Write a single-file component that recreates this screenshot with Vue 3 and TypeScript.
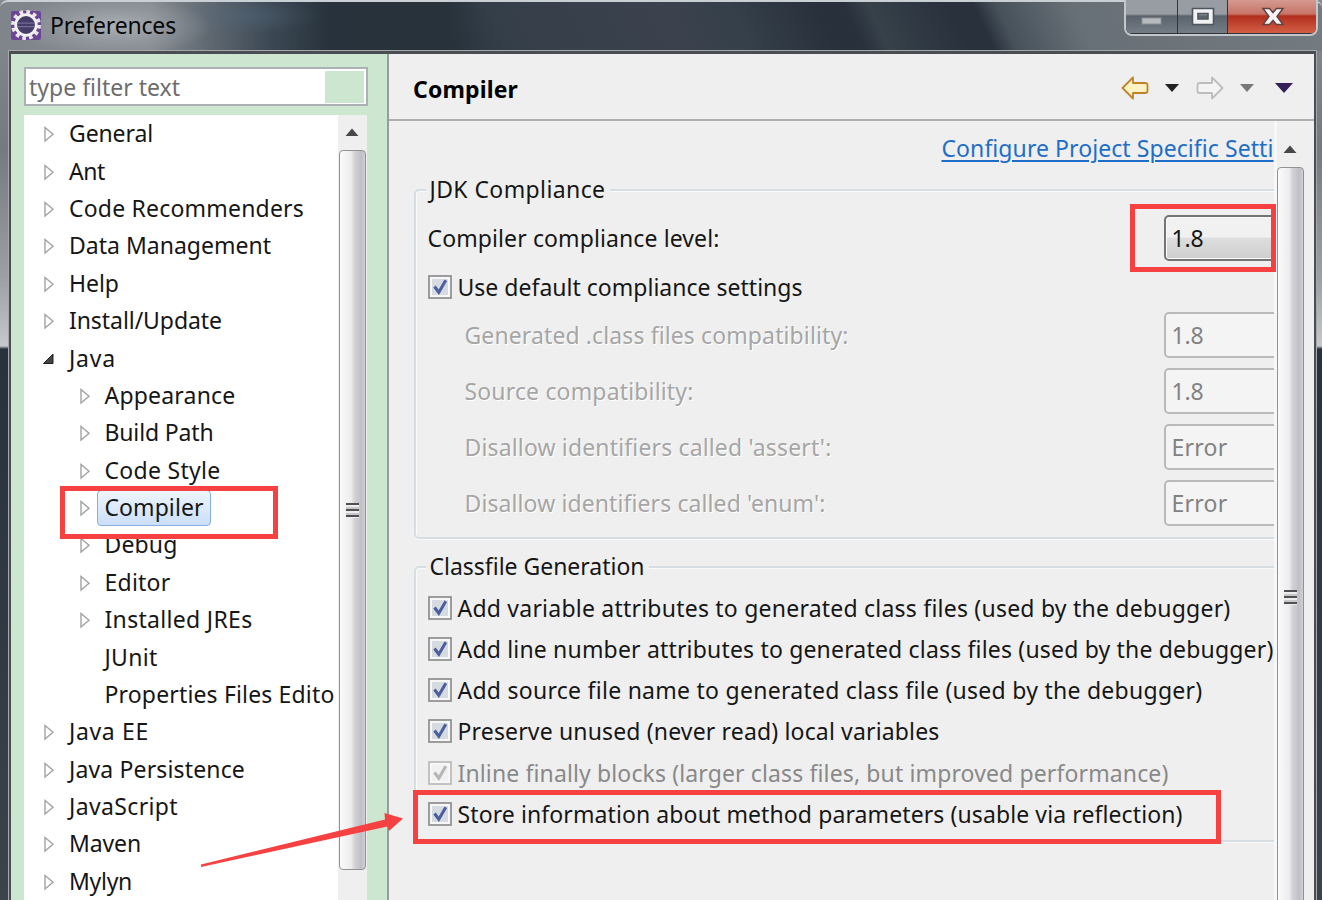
<script setup lang="ts">
import type { Directive } from 'vue'

// Spreads a label's letters so that it takes the given width in pixels.
const vFit: Directive<HTMLElement, number> = {
  mounted(el, { value }) {
    const natural = el.getBoundingClientRect().width
    const count = (el.textContent ?? '').trim().length
    if (value && count > 1) el.style.letterSpacing = `${(value - natural) / count}px`
  },
}

interface TreeItem {
  label: string
  width: number
  child?: boolean
  state?: 'open' | 'leaf'
  selected?: boolean
}

const tree: TreeItem[] = [
  { label: 'General', width: 84 },
  { label: 'Ant', width: 36 },
  { label: 'Code Recommenders', width: 235 },
  { label: 'Data Management', width: 202 },
  { label: 'Help', width: 50 },
  { label: 'Install/Update', width: 153 },
  { label: 'Java', width: 47, state: 'open' },
  { label: 'Appearance', width: 131, child: true },
  { label: 'Build Path', width: 109, child: true },
  { label: 'Code Style', width: 116, child: true },
  { label: 'Compiler', width: 99, child: true, selected: true },
  { label: 'Debug', width: 73, child: true },
  { label: 'Editor', width: 66, child: true },
  { label: 'Installed JREs', width: 148, child: true },
  { label: 'JUnit', width: 53, child: true, state: 'leaf' },
  { label: 'Properties Files Edito', width: 230, child: true, state: 'leaf' },
  { label: 'Java EE', width: 80 },
  { label: 'Java Persistence', width: 176 },
  { label: 'JavaScript', width: 109 },
  { label: 'Maven', width: 72 },
  { label: 'Mylyn', width: 63 },
]

const compliance = [
  { label: 'Generated .class files compatibility:', width: 384, value: '1.8', valueWidth: 32 },
  { label: 'Source compatibility:', width: 229, value: '1.8', valueWidth: 32 },
  { label: "Disallow identifiers called 'assert':", width: 367, value: 'Error', valueWidth: 56 },
  { label: "Disallow identifiers called 'enum':", width: 361, value: 'Error', valueWidth: 56 },
]

const classfile = [
  { label: 'Add variable attributes to generated class files (used by the debugger)', width: 773 },
  { label: 'Add line number attributes to generated class files (used by the debugger)', width: 816 },
  { label: 'Add source file name to generated class file (used by the debugger)', width: 745 },
  { label: 'Preserve unused (never read) local variables', width: 482 },
  { label: 'Inline finally blocks (larger class files, but improved performance)', width: 711, disabled: true },
  { label: 'Store information about method parameters (usable via reflection)', width: 725 },
]
</script>

<template>
  <div class="window">
    <header class="titlebar">
      <svg class="app-icon" viewBox="0 0 32 32">
        <rect x="1" y="2" width="30" height="29" rx="2" fill="#6b4596" />
        <circle cx="16" cy="16" r="13" fill="none" stroke="#e9e6ea" stroke-width="4" stroke-dasharray="3.6 3.2" />
        <circle cx="16" cy="16" r="10.3" fill="#473d69" stroke="#f3f1ee" stroke-width="2.8" />
        <path d="M8 14.2H24M8 17.6H24" stroke="#766b98" stroke-width="1.2" />
      </svg>
      <span class="title"><span v-fit="126">Preferences</span></span>
      <div class="controls">
        <span class="control min"><svg viewBox="0 0 52 33"><rect x="16" y="18" width="19" height="6" fill="#b7bbc0" stroke="#8b9098" /></svg></span>
        <span class="control max"><svg viewBox="0 0 49 33"><path fill-rule="evenodd" d="M14.5 8.5H35.5V24.5H14.5ZM20 13.5V19H30V13.5Z" fill="#f2f2f2" stroke="#4d5560" stroke-width="1.6" /></svg></span>
        <span class="control close"><svg viewBox="0 0 88 33"><path d="M35 8.5H41.5L45 12.5L48.5 8.5H55L49 16.5L55 24.5H48.5L45 20.5L41.5 24.5H35L41 16.5Z" fill="#f7f5f5" stroke="#604344" stroke-width="1.5" /></svg></span>
      </div>
    </header>

    <main class="client">
      <aside class="sidebar">
        <div class="filter"><span v-fit="151">type filter text</span><i class="filter-clear"></i></div>
        <div class="tree-box">
          <ul class="tree">
            <li v-for="item in tree" :key="item.label" :class="{ child: item.child }">
              <svg class="twisty" viewBox="0 0 14 18">
                <path v-if="item.state === 'open'" d="M1.5 13.5H11V4Z" fill="#444" stroke="#222" />
                <path v-else-if="item.state !== 'leaf'" d="M3 2.4V16L11 9.2Z" fill="#fff" stroke="#a3a3a3" stroke-width="1.4" />
              </svg>
              <span class="node" :class="{ selected: item.selected }"><span v-fit="item.width">{{ item.label }}</span></span>
            </li>
          </ul>
          <div class="scroll tree-scroll">
            <svg class="arrow-up" viewBox="0 0 14 8"><path d="M0.5 8L7 0.5L13.5 8Z" fill="#484848" /></svg>
            <div class="thumb"><i class="grip"></i></div>
          </div>
        </div>
      </aside>

      <section class="page">
        <div class="page-head">
          <h1><span v-fit="105">Compiler</span></h1>
          <nav class="history">
            <svg class="nav-arrow" viewBox="0 0 28 24"><path d="M1.5 12L12 1.5V7H24Q26.5 7 26.5 9V15Q26.5 17 24 17H12V22.5Z" fill="#fff2c3" stroke="#be8429" stroke-width="1.8" stroke-linejoin="round" /></svg>
            <svg class="drop" viewBox="0 0 14 8"><path d="M0 0H14L7 8Z" fill="#222" /></svg>
            <svg class="nav-arrow next" viewBox="0 0 28 24"><path d="M26.5 12L16 1.5V7H4Q1.5 7 1.5 9V15Q1.5 17 4 17H16V22.5Z" fill="#f4f4f4" stroke="#bdbdbd" stroke-width="1.8" stroke-linejoin="round" /></svg>
            <svg class="drop" viewBox="0 0 14 8"><path d="M0 0H14L7 8Z" fill="#77777c" /></svg>
            <svg class="drop menu" viewBox="0 0 18 10"><path d="M0 0H18L9 10Z" fill="#35205a" /></svg>
          </nav>
        </div>

        <div class="page-body">
          <div class="form">
            <div class="link-row"><a><span v-fit="332">Configure Project Specific Setti</span></a></div>

            <div class="group jdk">
              <h2><span v-fit="176">JDK Compliance</span></h2>
              <div class="row level">
                <span v-fit="292">Compiler compliance level:</span>
                <div class="combo active"><span v-fit="32">1.8</span></div>
              </div>
              <div class="row check-row">
                <svg class="check" viewBox="0 0 24 24"><rect x="1" y="1" width="22" height="22" fill="#f7f7f7" stroke="#8d8d8f" stroke-width="1.7" /><rect x="4" y="4" width="16" height="16" fill="#d6dae1" /><path d="M6.5 11.5L10.8 17.2L17.8 5.3" fill="none" stroke="#4a5f9d" stroke-width="3" /></svg>
                <span v-fit="345">Use default compliance settings</span>
              </div>
              <div v-for="row in compliance" :key="row.label" class="row sub">
                <span v-fit="row.width" class="etched">{{ row.label }}</span>
                <div class="combo"><span v-fit="row.valueWidth">{{ row.value }}</span></div>
              </div>
            </div>

            <div class="group classfile">
              <h2><span v-fit="215">Classfile Generation</span></h2>
              <div v-for="opt in classfile" :key="opt.label" class="row option" :class="{ disabled: opt.disabled }">
                <svg class="check" viewBox="0 0 24 24">
                  <rect x="1" y="1" width="22" height="22" fill="#f7f7f7" :stroke="opt.disabled ? '#bababa' : '#8d8d8f'" stroke-width="1.7" />
                  <rect x="4" y="4" width="16" height="16" :fill="opt.disabled ? '#f1f1f1' : '#d6dae1'" />
                  <path d="M6.5 11.5L10.8 17.2L17.8 5.3" fill="none" :stroke="opt.disabled ? '#b5b5b5' : '#4a5f9d'" stroke-width="3" />
                </svg>
                <span v-fit="opt.width">{{ opt.label }}</span>
              </div>
            </div>
          </div>
          <div class="scroll page-scroll">
            <svg class="arrow-up" viewBox="0 0 14 8"><path d="M0.5 8L7 0.5L13.5 8Z" fill="#484848" /></svg>
            <div class="thumb"><i class="grip"></i></div>
          </div>
        </div>
      </section>
    </main>

    <i class="mark mark-tree"></i>
    <i class="mark mark-level"></i>
    <i class="mark mark-store"></i>
    <svg class="pointer" viewBox="0 0 206 60"><path d="M1 54.5L185 9.5L184.5 3L203 8.5L189 21L187.5 16.5L1 57Z" fill="#f54142" /></svg>
  </div>
</template>

<style>
body { margin: 0; overflow: hidden; }
</style>

<style scoped>
* { box-sizing: border-box; }
.window {
  position: relative;
  width: 1322px;
  height: 900px;
  overflow: hidden;
  font-family: "Noto Sans", "Open Sans", sans-serif;
  font-size: 23px;
  line-height: 30px;
  color: #161616;
  white-space: nowrap;
  background: linear-gradient(180deg, #858a8f 0, #747a80 150px, #9da0a4 280px, #c6c8cb 346px, #28323c 349px, #303943 600px, #3b434b 900px);
}
svg { display: block; flex: none; }
.titlebar {
  display: flex;
  height: 51px;
  padding-left: 10px;
  border-top: 2px solid #c9d0d5;
  border-radius: 8px 8px 0 0;
  background:
    radial-gradient(ellipse 100px 30px at 112px 24px, rgba(184,188,192,.75), rgba(160,166,172,.4) 60%, transparent),
    radial-gradient(ellipse 70px 18px at 250px 14px, rgba(84,106,126,.45), transparent),
    linear-gradient(90deg, #7f858b 0, #858a90 150px, #626b74 205px, #3c4853 270px, #27323c 330px, #27323b 440px, transparent 480px),
    linear-gradient(65deg, #27323b 400px, #343e49 460px, #3b424d 620px, #35404a 680px, #28303b 760px, #28303b 784px, #36414a 806px, #29313c 880px, #29313c 902px, #46515a 922px, #687077 990px, #737a80 1200px);
}
.app-icon { width: 32px; height: 32px; margin-top: 7px; }
.title { margin: 8px 0 0 8px; color: #080808; }
.controls {
  display: flex;
  height: 36px;
  margin: -2px 4px 0 auto;
  border: 2px solid #c3c6ca;
  border-top: 0;
  border-radius: 0 0 8px 8px;
  overflow: hidden;
  background: #30353b;
}
.control { display: block; height: 33px; border-right: 1px solid #30353b; background: linear-gradient(#989da3 0 14px, #5a626b 16px, #737b84 32px); }
.control svg { height: 33px; }
.min { width: 52px; }
.max { width: 50px; }
.close { width: 88px; border: 0; background: linear-gradient(#d59a90 0, #c77466 14px, #b32e1c 16px, #d05d43 32px); }

.client {
  display: flex;
  height: 849px;
  margin: 0 6px 0 9px;
  border: 3px solid #4a4e52;
  border-width: 3px 2px 0;
  box-shadow: 0 0 0 1px #a4a8ab;
}
.sidebar { width: 376px; flex: none; padding: 13px 0 0 13px; background: #cde6cf; }
.filter {
  display: flex;
  align-items: center;
  width: 344px;
  height: 39px;
  padding: 0 2px 0 3px;
  border: 2px solid #acb1b6;
  background: #fff;
  color: #6d6d6d;
}
.filter-clear { width: 39px; height: 32px; margin-left: auto; background: #cde6cf; }
.tree-box { display: flex; width: 343px; height: 786px; margin-top: 9px; background: #fff; }
.tree { width: 314px; margin: -0.4px 0 0; padding: 0; list-style: none; overflow: hidden; }
.tree li { display: flex; align-items: center; height: 37.375px; padding-left: 18px; }
.tree li.child { padding-left: 54px; }
.twisty { width: 14px; height: 18px; margin-top: 2px; }
.node { margin-left: 5px; padding: 0 7px; height: 36px; line-height: 34px; border: 1px solid transparent; border-radius: 4px; }
.tree li.child .node { margin-left: 4.5px; }
.node.selected { padding-right: 6px; margin-top: 2px; line-height: 32px; border-color: #86afe0; background: linear-gradient(#eef5fe, #cbdff9); }

.scroll { display: flex; flex-direction: column; align-items: center; background: #efefef; }
.tree-scroll { width: 29px; padding-right: 1px; }
.arrow-up { width: 14px; height: 8px; margin-top: 13px; }
.thumb {
  display: flex;
  align-items: center;
  justify-content: center;
  width: 27px;
  border: 1.5px solid #929294;
  border-radius: 4px;
  background: linear-gradient(90deg, #fafafa 0, #ececef 45%, #d2d2d7 58%, #bfbfc6 85%, #d0d0d4);
}
.tree-scroll .thumb { height: 720px; margin-top: 14px; }
.grip { width: 13px; height: 15px; background: repeating-linear-gradient(#505050 0 2px, #ededed 2px 4px, #c8c8cc 4px 6px); }

.page { flex: 1; min-width: 0; border-left: 2px solid #999c9c; background: #efefef; }
.page-head { display: flex; align-items: center; height: 67px; padding: 3px 21px 0 24px; border-bottom: 2px solid #afafaf; }
h1 { margin: 2px 0 0; font-size: 23px; font-weight: 700; color: #000; }
.history { display: flex; align-items: center; margin-left: auto; }
.nav-arrow { width: 28px; height: 24px; }
.drop { width: 14px; height: 8px; margin-left: 16px; }
.next { margin-left: 17px; }
.menu { width: 18px; height: 10px; margin-left: 21px; }

.page-body { display: flex; height: 779px; }
.form { width: 884.5px; padding-left: 24.5px; overflow: hidden; }
.link-row { display: flex; justify-content: flex-end; height: 68.4px; padding-top: 12px; }
.link-row a { color: #1e6ec8; text-decoration: underline; text-decoration-thickness: 2px; text-underline-offset: 3px; }
.group { width: 875px; border: 2px solid #d7dee3; border-radius: 5px; box-shadow: inset 1px 1px 0 #fafafa, 0 1px 0 #fafafa; }
.jdk { height: 350px; }
.classfile { height: 276px; margin-top: 27px; }
h2 { display: block; width: max-content; height: 30px; margin: -17px 0 0 10px; padding: 0 4px; font-size: 23px; font-weight: 400; background: #efefef; }
.row { display: flex; align-items: center; padding-left: 12px; }
.level { height: 46px; margin-top: 11px; }
.check-row { height: 40px; margin-top: 6px; }
.check { width: 24px; height: 24px; margin-right: 6px; }
.sub { height: 46px; margin-bottom: 10px; padding-left: 49px; }
.check-row + .sub { margin-top: 5px; }
.etched { color: #a6a6a6; text-shadow: 1px 1px 0 #fff; }
.combo { flex: none; width: 123px; height: 46px; margin-left: auto; padding-left: 6px; line-height: 42px; border: 2px solid #b8babc; border-radius: 5px; color: #828282; background: #f4f4f4; }
.combo.active { color: #161616; border-color: #747474; box-shadow: inset 0 0 0 1px #fafafa; background: linear-gradient(#f1f1f1 0 48%, #dedede 50%, #cecece); }
.option { height: 41.15px; }
h2 + .option { margin-top: 6px; }
.option.disabled { color: #898989; }
.page-scroll { width: 30px; border-left: 3px solid #f7f7f7; }
.page-scroll .arrow-up { margin-top: 24px; }
.page-scroll .thumb { height: 861px; flex: none; margin-top: 14px; }

.mark { position: absolute; border: 5.5px solid #f54142; }
.mark-tree { left: 60px; top: 486px; width: 218px; height: 53px; }
.mark-level { left: 1130px; top: 204px; width: 146px; height: 68px; }
.mark-store { left: 413px; top: 790px; width: 808px; height: 54px; }
.pointer { position: absolute; left: 200px; top: 810px; width: 206px; height: 60px; }
</style>
